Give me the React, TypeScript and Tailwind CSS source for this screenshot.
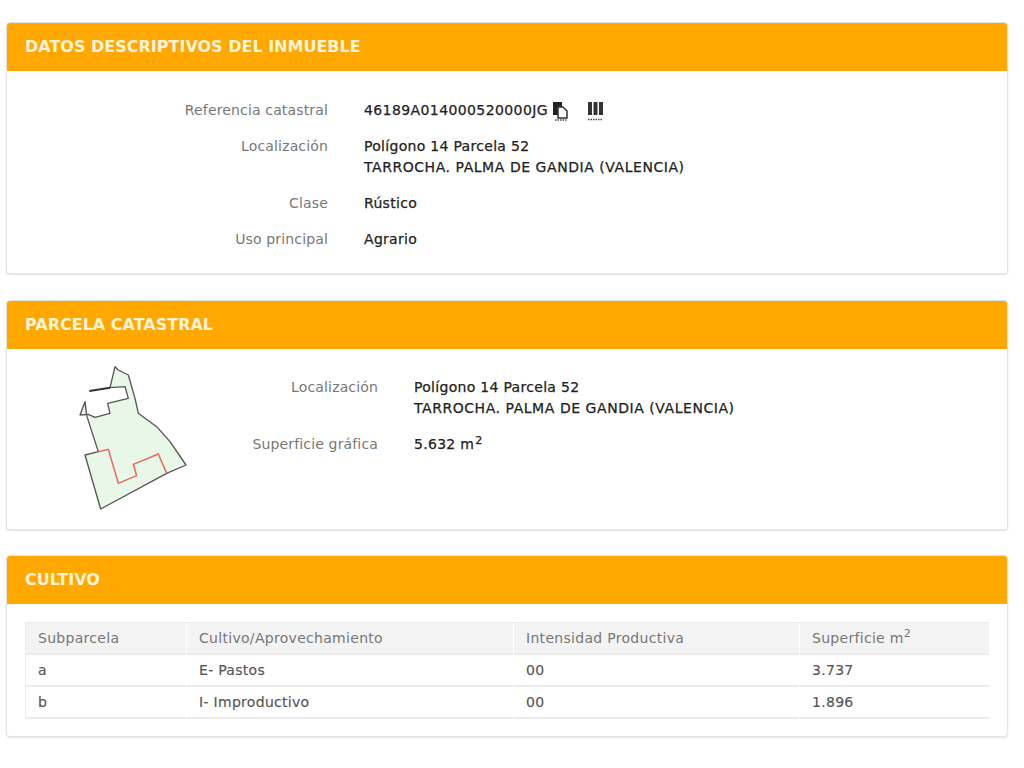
import React from "react";

const font = { fontFamily: '"DejaVu Sans", Verdana, sans-serif' };

const Card = ({ title, className, children }: { title: string; className: string; children: React.ReactNode }) => (
  <section className={`rounded-[4px] border border-[#e4e4e4] bg-white shadow-[0_1px_2px_rgba(0,0,0,0.12)] ${className}`}>
    <h2 className="flex h-[48px] items-center rounded-t-[3px] bg-[#ffa800] pl-[18px] text-[16px] font-bold text-[#fff3da]">
      {title}
    </h2>
    {children}
  </section>
);

const Row = ({ label, labelWidth, children }: { label: string; labelWidth: string; children: React.ReactNode }) => (
  <div className="flex gap-[36px] leading-[21px]">
    <div className={`${labelWidth} text-right tracking-[0.15px] text-[#777]`}>{label}</div>
    <div className="tracking-[0.3px] text-[#222] [-webkit-text-stroke:0.25px_#222]">{children}</div>
  </div>
);

const Address = () => (
  <>
    Polígono 14 Parcela 52
    <br />
    <span className="tracking-[0.55px]">TARROCHA. PALMA DE GANDIA (VALENCIA)</span>
  </>
);

const CopyIcon = () => (
  <svg width="17" height="20" viewBox="0 0 17 20" className="ml-[4px]">
    <path d="M1 1h9v13H1z" fill="#222" />
    <path d="M6 6h5l4 4v7H6z" fill="#fff" stroke="#333" strokeWidth="1.500" />
    <path d="M3 19h12" stroke="#444" strokeWidth="1.500" strokeDasharray="1.500 1" />
  </svg>
);

const BarcodeIcon = () => (
  <svg width="17" height="20" viewBox="0 0 17 20" className="ml-[18px]">
    <path d="M1 1h4v13H1zM6.500 1h4v13h-4zM12 1h4v13h-4z" fill="#333" />
    <path d="M1 18.500h15" stroke="#444" strokeWidth="1.500" strokeDasharray="1.500 1" />
  </svg>
);

const ParcelMap = () => (
  <svg width="140" height="165" viewBox="0 0 420 495" className="ml-[53px] mt-[6px] shrink-0">
    <path
      d="M115 290L80 182L75 140L60 180L85 178L105 187L150 175L143 145L205 130L195 95L150 98L165 35L175 45L205 60L225 130L235 175L290 215L330 260L378 330L320 355L122 462L75 300Z"
      fill="#e8f7e8"
      stroke="#555"
      strokeWidth="4"
      strokeLinejoin="round"
    />
    <path d="M88 108L150 98" stroke="#333" strokeWidth="6" />
    <path d="M115 290L145 283L175 385L230 362L220 328L295 297L320 355" fill="none" stroke="#e8685f" strokeWidth="4.500" />
  </svg>
);

const cols = ["w-[160px]", "w-[326px]", "w-[285px]", "w-[189px]"];

const TableRow = ({ cells, head }: { cells: React.ReactNode[]; head?: boolean }) => (
  <div className="flex">
    {cells.map((c, i) => (
      <div
        key={i}
        className={`${cols[i]} flex h-[32px] items-center border-b-2 border-[#ececec] pl-[12px] tracking-[0.3px] ${
          i > 0 ? "ml-[1px]" : ""
        } ${head ? "bg-[#f3f3f3] text-[#777]" : "text-[#555] [-webkit-text-stroke:0.15px_#555]"}`}
      >
        {c}
      </div>
    ))}
  </div>
);

export default function App() {
  return (
    <div className="min-h-[768px] bg-white pl-[6px] pr-[16px] pt-[22px] text-[14px]" style={font}>
      <Card title="DATOS DESCRIPTIVOS DEL INMUEBLE" className="h-[252px]">
        <div className="flex flex-col gap-[15px] pt-[29px]">
          <Row label="Referencia catastral" labelWidth="w-[321px]">
            <span className="flex items-center tracking-[0.4px]">
              46189A014000520000JG
              <CopyIcon />
              <BarcodeIcon />
            </span>
          </Row>
          <Row label="Localización" labelWidth="w-[321px]">
            <Address />
          </Row>
          <Row label="Clase" labelWidth="w-[321px]">
            Rústico
          </Row>
          <Row label="Uso principal" labelWidth="w-[321px]">
            Agrario
          </Row>
        </div>
      </Card>

      <Card title="PARCELA CATASTRAL" className="mt-[26px] h-[230px]">
        <div className="flex">
          <ParcelMap />
          <div className="flex flex-col gap-[15px] pt-[28px]">
            <Row label="Localización" labelWidth="w-[178px]">
              <Address />
            </Row>
            <Row label="Superficie gráfica" labelWidth="w-[178px]">
              5.632 m<sup className="ml-[1px] text-[11px]">2</sup>
            </Row>
          </div>
        </div>
      </Card>

      <Card title="CULTIVO" className="mt-[25px] h-[182px]">
        <div className="px-[18px] pt-[18px]">
          <div className="border-t border-l border-[#ececec]">
            <TableRow
              head
              cells={[
                "Subparcela",
                "Cultivo/Aprovechamiento",
                "Intensidad Productiva",
                <span key="m">
                  Superficie m<sup className="text-[11px]">2</sup>
                </span>,
              ]}
            />
            <TableRow cells={["a", "E- Pastos", "00", "3.737"]} />
            <TableRow cells={["b", "I- Improductivo", "00", "1.896"]} />
          </div>
        </div>
      </Card>
    </div>
  );
}
